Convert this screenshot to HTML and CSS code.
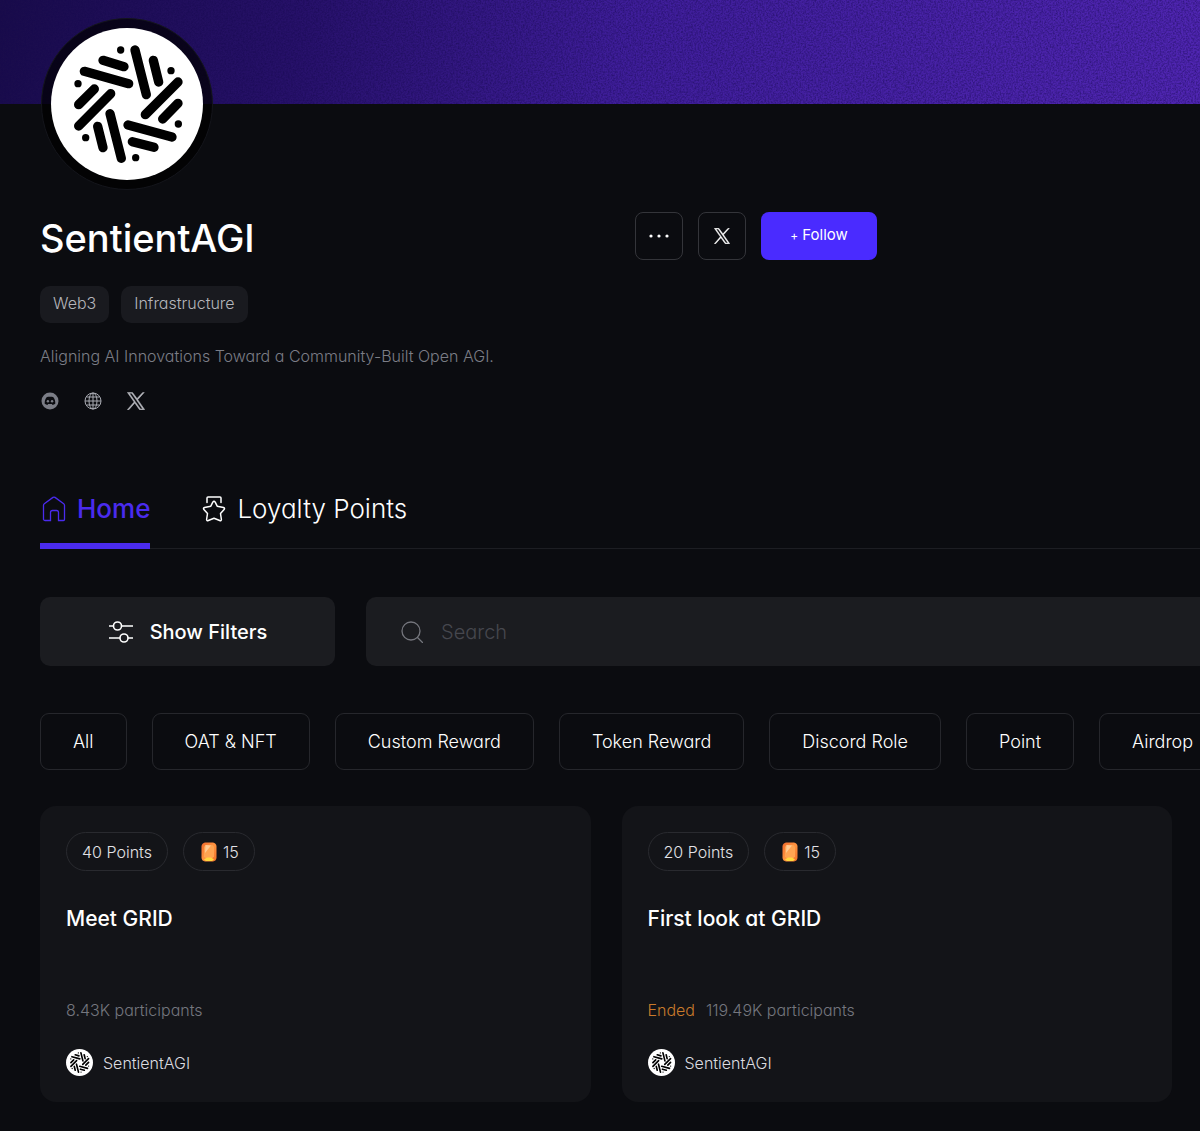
FILE: index.html
```html
<!DOCTYPE html>
<html lang="en">
<head>
<meta charset="utf-8">
<meta name="viewport" content="width=device-width, initial-scale=1">
<title>SentientAGI</title>
<link rel="stylesheet" href="styles.css">
</head>
<body>
<svg class="defs" aria-hidden="true">
  <defs>
    <linearGradient id="amber" x1="0" y1="0" x2="1" y2="1"><stop offset="0" stop-color="#f06a2c"/><stop offset=".5" stop-color="#ff9440"/><stop offset="1" stop-color="#f0702a"/></linearGradient>
    <symbol id="logo" viewBox="64 55 456 456">
      <circle cx="292" cy="283" r="228" fill="#fff"/>
      <g stroke="#000" stroke-width="28" stroke-linecap="round" fill="none">
        <path d="M164 185 297 222M220 152 283 171M316 121 350 255M371 152 387 217M445 217 347 315M445 281 399 328M295 346 427 382M308 396 373 413M241 312 275 446M204 350 220 414M243 252 147 349M194 238 147 285"/>
      </g>
      <g fill="#000">
        <circle cx="273" cy="121" r="11"/><circle cx="424" cy="183" r="11"/><circle cx="446" cy="343" r="11"/>
        <circle cx="318" cy="444" r="11"/><circle cx="168" cy="384" r="11"/><circle cx="145" cy="222" r="11"/>
      </g>
    </symbol>
    <symbol id="x" viewBox="0 0 24 24">
      <path fill="currentColor" stroke="currentColor" stroke-width=".7" d="M14.3 10.2 23 .5h-2l-7.600 8.300L7.300.5H.5l9 12.800L.5 23.500h2l7.900-8.900 6.300 8.900h6.900zM11.400 13.500l-.9-1.300L3.100 1.600h3.200l6 8.500.9 1.300 7.800 11.100h-3.200z"/>
    </symbol>
    <symbol id="gem" viewBox="0 0 16 20">
      <path fill="url(#amber)" d="M4 .5h8q3 .5 3.500 3.500v12q-.5 3-3.500 3.500H4Q1 19 .5 16V4Q1 1 4 .5z"/>
      <path fill="#ffa552" d="M4.500 3h7l1.500 2v9.500L11.500 16h-7L3 14.500V5z"/>
      <path fill="#ffcb94" d="m4.500 3 5.500.5-6 7.500z"/>
      <path fill="#ffd83f" d="m3 17.500 3-2h4l3 2-2 1.500H5z"/>
    </symbol>
  </defs>
</svg>

<header class="banner">
  <svg class="grain" aria-hidden="true">
    <filter id="noise" x="0" y="0" width="100%" height="100%" color-interpolation-filters="sRGB"><feTurbulence type="fractalNoise" baseFrequency="0.6" numOctaves="2" seed="4"/><feColorMatrix values="0 0 0 0 .08  0 0 0 0 .03  0 0 0 0 .3  2 0 0 0 -.7"/></filter>
    <rect width="100%" height="100%" filter="url(#noise)"/>
  </svg>
</header>

<main class="page">
  <div class="avatar"><svg role="img" aria-label="SentientAGI logo"><use href="#logo"/></svg></div>

  <section class="profile">
    <div class="profile-head">
      <h1>SentientAGI</h1>
      <div class="actions">
        <button class="icon-btn" type="button" aria-label="More">
          <svg class="dots" viewBox="0 0 20 4"><g fill="#fff"><circle cx="2" cy="2" r="1.600"/><circle cx="10" cy="2" r="1.600"/><circle cx="18" cy="2" r="1.600"/></g></svg>
        </button>
        <button class="icon-btn" type="button" aria-label="X"><svg class="i16"><use href="#x"/></svg></button>
        <button class="follow" type="button"><span class="plus">+</span> Follow</button>
      </div>
    </div>
    <div class="tags"><span>Web3</span><span>Infrastructure</span></div>
    <p class="about">Aligning AI Innovations Toward a Community-Built Open AGI.</p>
    <nav class="socials" aria-label="Social links">
      <a href="#discord" aria-label="Discord"><svg viewBox="0 0 18 18"><circle cx="9" cy="9" r="8.500" fill="#7b7d86"/><path fill="#0b0c10" d="M5.600 5.200C7 4.600 11 4.600 12.400 5.200c1.500 1.900 2 4.200 1.900 6.500-.9.700-1.800 1.100-2.700 1.300l-.7-1.100H7.100l-.7 1.100c-.9-.2-1.800-.6-2.700-1.300-.1-2.300.4-4.600 1.900-6.500z"/><circle cx="6.900" cy="9.300" r="1.200" fill="#7b7d86"/><circle cx="11.100" cy="9.300" r="1.200" fill="#7b7d86"/></svg></a>
      <a href="#website" aria-label="Website"><svg viewBox="0 0 18 18" fill="none" stroke="#a9abb2"><circle cx="9" cy="9" r="8"/><ellipse cx="9" cy="9" rx="4" ry="8"/><path d="M9 1v16M1 9h16M2.500 5h13M2.500 13h13"/></svg></a>
      <a href="#x-profile" aria-label="X"><svg><use href="#x"/></svg></a>
    </nav>
  </section>

  <nav class="tabs" aria-label="Sections">
    <a class="tab active" href="#home">
      <svg viewBox="0 0 24 26" fill="none" stroke="currentColor" stroke-width="1.300"><path d="M1.500 23.500V9.300q0-1 .8-1.600L11 1.400q1-.7 2 0l8.700 6.300q.8.600.8 1.600v14.200q0 1-1 1h-5v-8q0-2-2-2h-4q-2 0-2 2v8h-5.500q-1 0-1.500-1z"/></svg>Home</a>
    <a class="tab" href="#loyalty">
      <svg viewBox="0 0 24 26" fill="none" stroke="currentColor" stroke-width="1.500" stroke-linejoin="round" stroke-linecap="round"><path d="M5 6.500V2q0-1 1-1h12q1 0 1 1v4.500M10.800 6.200q1.200-1.800 2.400 0l2 4 6.300 1.300q1.600.6.600 2l-3.600 4 .9 6q-.1 1.600-1.700 1L12 22.200l-5.700 2.300q-1.600.6-1.700-1l.9-6-3.600-4q-1-1.400.6-2l6.300-1.300z"/></svg>Loyalty Points</a>
  </nav>

  <form class="toolbar">
    <button class="filters" type="button">
      <svg viewBox="0 0 26 22" fill="none" stroke="currentColor" stroke-width="1.600"><path d="M1 5h4.500M13.500 5H25M1 17h11M20 17h5"/><circle cx="9.500" cy="5" r="4"/><circle cx="16" cy="17" r="4"/></svg>Show Filters</button>
    <label class="search">
      <svg viewBox="0 0 22 22" fill="none" stroke="#75767d" stroke-width="1.300" stroke-linecap="round"><circle cx="10" cy="10" r="9"/><path d="m16.500 16.500 5 5"/></svg>
      <input type="search" placeholder="Search" aria-label="Search">
    </label>
  </form>

  <div class="chips">
    <button type="button">All</button>
    <button type="button">OAT &amp; NFT</button>
    <button type="button">Custom Reward</button>
    <button type="button">Token Reward</button>
    <button type="button">Discord Role</button>
    <button type="button">Point</button>
    <button type="button">Airdrop</button>
  </div>

  <section class="cards">
    <article class="card">
      <div class="pills"><span>40 Points</span><span><svg><use href="#gem"/></svg>15</span></div>
      <h2>Meet GRID</h2>
      <p class="meta">8.43K participants</p>
      <a class="author" href="#sentient"><svg><use href="#logo"/></svg>SentientAGI</a>
    </article>
    <article class="card">
      <div class="pills"><span>20 Points</span><span><svg><use href="#gem"/></svg>15</span></div>
      <h2>First look at GRID</h2>
      <p class="meta"><span class="ended">Ended</span>119.49K participants</p>
      <a class="author" href="#sentient"><svg><use href="#logo"/></svg>SentientAGI</a>
    </article>
  </section>
</main>
</body>
</html>
```
FILE: styles.css
```css
* { box-sizing: border-box; }
body {
  margin: 0;
  overflow-x: hidden;
  background: #0b0c10;
  color: #fff;
  font-family: Inter, "Liberation Sans", sans-serif;
  font-feature-settings: "cv11";
  font-size: 16px;
  font-weight: 300;
  line-height: 20px;
}
h1, h2, p { margin: 0; }
a { color: inherit; text-decoration: none; }
button, input { font: inherit; font-feature-settings: inherit; color: inherit; }
button { cursor: pointer; padding: 0; }
svg { display: block; flex: none; }
.defs { position: absolute; width: 0; height: 0; }

.banner { height: 104px; background: linear-gradient(100deg, #190c4a 0%, #27116a 25%, #3f1e9a 52%, #5026b2 100%); }
.grain { width: 100%; height: 100%; opacity: .5; }

.page { padding: 0 0 30px 40px; }
.avatar {
  position: relative;
  width: 172px;
  height: 172px;
  margin: -86px 0 0 1px;
  padding: 9px;
  border: 1px solid #14151b;
  border-radius: 50%;
  background: rgba(0, 0, 0, .7);
}
.avatar svg { width: 152px; height: 152px; }

.profile { max-width: 837px; padding-top: 20px; }
.profile-head { display: flex; align-items: center; justify-content: space-between; }
h1 { font-size: 38px; line-height: 48px; font-weight: 500; padding-top: 4px; }
.actions { display: flex; gap: 15px; padding-bottom: 1px; }
.icon-btn {
  display: grid;
  place-items: center;
  width: 48px;
  height: 48px;
  border: 1px solid #34353a;
  border-radius: 8px;
  background: none;
}
.dots { width: 20px; height: 4px; }
.i16 { width: 16px; height: 16px; }
.follow { width: 116px; height: 48px; border: 0; border-radius: 8px; background: #4a2bff; font-size: 15px; font-weight: 400; }
.plus { font-size: 12px; }
.tags { display: flex; gap: 12px; padding-top: 24px; }
.tags span { padding: 7px 13px 9px; line-height: 21px; border-radius: 10px; background: #191a1f; color: #b4b5bb; }
.about { padding-top: 23px; color: #7b7d86; }
.socials { display: flex; gap: 24px; padding-top: 26px; color: #b9bac0; }
.socials svg { width: 18px; height: 18px; }
.socials a { padding: 0 0 0 1px; }

.tabs { display: flex; gap: 50px; margin-top: 71px; border-bottom: 1px solid #1d1e23; font-size: 26px; }
.tab { display: flex; align-items: center; gap: 11px; height: 68px; padding-bottom: 12px; margin-bottom: -1px; }
.tab svg { width: 24px; height: 26px; margin-left: 2px; }
.active { color: #4a2bee; font-weight: 500; border-bottom: 6px solid #4a2bee; padding-bottom: 6px; }

.toolbar { display: flex; gap: 31px; margin: 48px 0 0; }
.filters { display: flex; align-items: center; justify-content: center; gap: 16px; width: 295px; height: 69px; border: 0; border-radius: 10px; background: #1b1c20; font-size: 20px; font-weight: 500; }
.filters svg { width: 26px; height: 22px; }
.search { display: flex; flex: 1; align-items: center; gap: 18px; padding-left: 35px; border-radius: 10px 0 0 10px; background: #1b1c20; }
.search svg { width: 22px; height: 22px; }
.search input { flex: 1; min-width: 0; padding: 0; border: 0; outline: 0; background: none; font-size: 20px; }
.search input::placeholder { color: #46474e; opacity: 1; }

.chips { display: flex; gap: 25px; margin-top: 47px; overflow: hidden; }
.chips button { flex: none; height: 57px; padding: 0 32px; border: 1px solid #26272c; border-radius: 9px; background: none; font-size: 18px; }

.cards { display: grid; grid-template-columns: 1fr 1fr; gap: 31px; margin: 36px 28px 0 0; }
.card { padding: 26px; border-radius: 16px; background: #131418; }
.pills { display: flex; gap: 15px; }
.pills span { display: flex; align-items: center; gap: 6px; height: 39px; padding: 0 15px; border: 1px solid #292a2f; border-radius: 20px; color: #e2e2e6; }
.pills svg { width: 16px; height: 20px; margin-left: 2px; }
h2 { padding-top: 35px; font-size: 21px; line-height: 26px; font-weight: 500; }
.meta { display: flex; gap: 11px; padding-top: 68px; line-height: 20px; color: #74767e; }
.ended { color: #c97a2b; }
.author { display: flex; align-items: center; gap: 10px; padding-top: 29px; color: #dcdce0; }
.author svg { width: 27px; height: 27px; }
```
